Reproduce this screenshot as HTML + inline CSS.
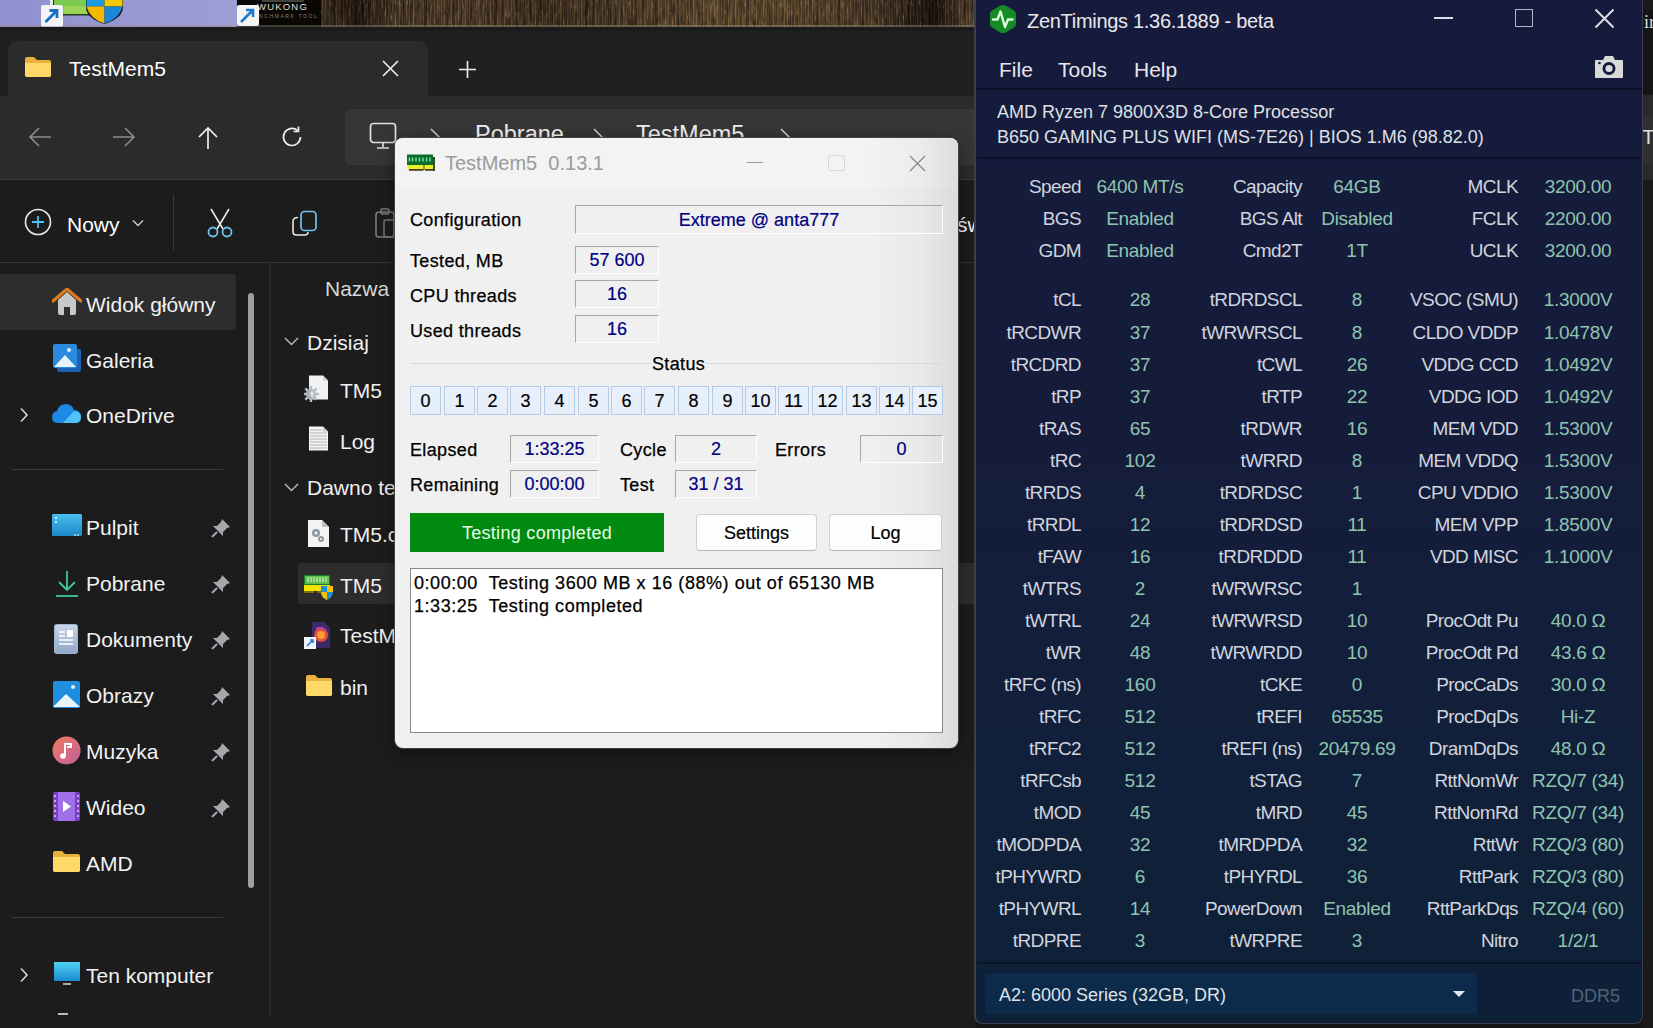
<!DOCTYPE html>
<html><head><meta charset="utf-8">
<style>
*{margin:0;padding:0;box-sizing:border-box}
html,body{width:1653px;height:1028px;overflow:hidden;background:#161616;font-family:"Liberation Sans",sans-serif}
.a{position:absolute}
.t{position:absolute;white-space:nowrap;line-height:1}
/* desktop */
#desk{left:0;top:0;width:1653px;height:27px;background:#4a3826}
#lav{left:0;top:0;width:237px;height:27px;background:linear-gradient(90deg,#8e91cd,#9699d3 60%,#9c9ed6)}
#wuk{left:237px;top:0;width:84px;height:27px;background:#0a0806}
#brown{left:321px;top:0;width:660px;height:27px;background:
 repeating-linear-gradient(90deg,rgba(0,0,0,.25) 0 1px,rgba(255,200,130,.08) 1px 2px,rgba(0,0,0,.12) 2px 4px,rgba(255,210,150,.05) 4px 5px,rgba(0,0,0,.18) 5px 7px),
 repeating-linear-gradient(90deg,rgba(0,0,0,0) 0 11px,rgba(0,0,0,.2) 11px 14px,rgba(0,0,0,0) 14px 23px),
 linear-gradient(90deg,#4a3826,#2a1e14 6%,#5a4530 11%,#5c4630 25%,#4a3826 33%,#5e4830 48%,#705838 60%,#6a5236 72%,#5a4630 84%,#1e1610 93%,#5a4530 97%,#6a5438)}
/* explorer */
#exp{left:0;top:27px;width:976px;height:1001px;background:#1c1c1c}
#tabstrip{left:0;top:27px;width:976px;height:69px;background:#202020}
#tab{left:8px;top:41px;width:420px;height:56px;background:#2b2b2b;border-radius:9px 9px 0 0}
#nav{left:0;top:96px;width:976px;height:84px;background:#2b2b2b;border-bottom:1px solid #3a3a3a}
#addr{left:345px;top:109px;width:640px;height:56px;background:#363636;border-radius:6px}
#cmd{left:0;top:181px;width:976px;height:82px;background:#1c1c1c;border-bottom:1px solid #333}
#side{left:0;top:263px;width:270px;height:753px;background:#1c1c1c}
.si{position:absolute;left:86px;font-size:20px;color:#f2f2f2;white-space:nowrap;line-height:1}
.pin{position:absolute;left:212px;width:18px;height:18px}

.tm{font-size:18px;color:#000;letter-spacing:0.35px;-webkit-text-stroke:0.25px #000}
.bx{position:absolute;border-top:1px solid #a8a8a8;border-left:1px solid #a8a8a8;border-right:1px solid #fff;border-bottom:1px solid #fff;display:flex;align-items:center;justify-content:center}
.bx span{font-size:18px;color:#000080;line-height:1;white-space:nowrap;-webkit-text-stroke:0.2px #000080}
.sb{position:absolute;top:386px;width:31px;height:29px;background:#e6effa;border:1px solid #b4cbe8;display:flex;align-items:center;justify-content:center}
.sb span{font-size:18px;color:#000;line-height:1;-webkit-text-stroke:0.2px #000}
.btn{position:absolute;background:#fdfdfd;border:1px solid #d0d0d0;border-bottom-color:#b8b8b8;border-radius:4px;display:flex;align-items:center;justify-content:center}
.btn span{font-size:18px;color:#000;line-height:1;-webkit-text-stroke:0.2px #000}

.zl{position:absolute;font-size:19px;line-height:1;color:#d0d4de;white-space:nowrap;letter-spacing:-0.6px}
.zv{position:absolute;width:200px;text-align:center;font-size:19px;line-height:1;color:#8fc4b0;white-space:nowrap;letter-spacing:-0.3px}
</style></head><body>
<div id="desk" class="a"></div>
<div id="lav" class="a"></div>
<div id="brown" class="a"></div>
<svg class="a" style="left:321px;top:0" width="655" height="25" viewBox="0 0 655 25"><defs><filter id="grain" x="0" y="0" width="100%" height="100%"><feTurbulence type="fractalNoise" baseFrequency="0.35 0.06" numOctaves="3" seed="7"/><feColorMatrix type="matrix" values="0 0 0 0 0  0 0 0 0 0  0 0 0 0 0  0 0 0 -1.6 1.05"/></filter><filter id="grain2" x="0" y="0" width="100%" height="100%"><feTurbulence type="fractalNoise" baseFrequency="0.5 0.1" numOctaves="2" seed="3"/><feColorMatrix type="matrix" values="0 0 0 0 1  0 0 0 0 0.85  0 0 0 0 0.6  0 0 0 2.2 -1.35"/></filter></defs><rect width="655" height="25" filter="url(#grain)" opacity=".55"/><rect width="655" height="25" filter="url(#grain2)" opacity=".45"/></svg>
<div id="wuk" class="a"></div>


<div id="exp" class="a"></div>
<div id="tabstrip" class="a"></div>
<div class="a" style="left:0;top:25px;width:976px;height:2px;background:rgba(150,140,125,.4)"></div>
<div class="a" style="left:0;top:27px;width:976px;height:4px;background:#1b1b1b"></div>
<div id="tab" class="a"></div>
<div id="nav" class="a"></div>
<div id="addr" class="a"></div>
<div id="cmd" class="a"></div>


<!-- desktop icons -->
<svg class="a" style="left:40px;top:0" width="85" height="27" viewBox="0 0 85 27">
 <rect x="10" y="0" width="3" height="6" fill="#e8e8f0"/>
 <rect x="13" y="0" width="2" height="6" fill="#1a2a1a"/>
 <rect x="14" y="0" width="36" height="15.5" fill="#1e3a1e"/>
 <rect x="14" y="0" width="35" height="14" fill="#7cc850"/>
 <g stroke="#d8f060" stroke-width="0.8" opacity=".8"><path d="M25 6v8M27 6v8M29 6v8M31 6v8M33 6v8M35 6v8M37 6v8M39 6v8M41 6v8M43 6v8M45 6v8M47 6v8"/></g>
 <path d="M46 0 h37 v7 q0 11 -18.5 17 q-18.5 -6 -18.5 -17z" fill="#1a1a1a"/>
 <path d="M46.5 0 h18 v6.5 h-18z" fill="#1a9ae0"/>
 <path d="M64.5 0 h18 v6.5 h-18z" fill="#f5c800"/>
 <path d="M46.5 6.5 h18 v17 q-15 -5 -18 -17z" fill="#f5b800"/>
 <path d="M64.5 6.5 h18 q-3 12 -18 17z" fill="#1a88d8"/>
 <rect x="1" y="5" width="22" height="21.5" rx="2" fill="#f4f4f8"/>
 <path d="M5.5 22 L15.5 12 M9.5 10.5 h7.5 v7.5" stroke="#1870c0" stroke-width="2.8" fill="none"/>
</svg>
<div class="t" style="left:257px;top:2px;font-size:9.5px;color:#e0dcd4;letter-spacing:1.2px">WUKONG</div><div class="a" style="left:262px;top:0;width:42px;height:2px;background:#6a655e;opacity:.6"></div>
<div class="t" style="left:259px;top:14px;font-size:5px;color:#8a8070;letter-spacing:1.6px">NCHMARK TOOL</div>
<svg class="a" style="left:237px;top:4px" width="22" height="23" viewBox="0 0 22 23">
 <rect x="0" y="1" width="22" height="21" rx="2" fill="#f4f4f4"/>
 <path d="M4 18 L15 7 M9 6 h7 v7" stroke="#1a7ad0" stroke-width="2.6" fill="none"/>
</svg>

<!-- tab -->
<svg class="a" style="left:25px;top:57px" width="26" height="20" viewBox="0 0 26 20">
 <path d="M0 2 q0-2 2-2 h7 l3 3 h12 q2 0 2 2 v13 q0 2-2 2 h-22 q-2 0-2-2z" fill="#e8b23a"/>
 <path d="M0 6 h26 v12 q0 2-2 2 h-22 q-2 0-2-2z" fill="#ffd86a"/>
</svg>
<div class="t" style="left:69px;top:58px;font-size:21px;color:#fff">TestMem5</div>
<svg class="a" style="left:382px;top:60px" width="17" height="17" viewBox="0 0 17 17"><path d="M1 1L16 16M16 1L1 16" stroke="#f0f0f0" stroke-width="1.6"/></svg>
<svg class="a" style="left:458px;top:60px" width="19" height="19" viewBox="0 0 19 19"><path d="M9.5 1v17M1 9.5h17" stroke="#f0f0f0" stroke-width="1.6"/></svg>

<!-- nav -->
<svg class="a" style="left:28px;top:126px" width="24" height="22" viewBox="0 0 24 22"><path d="M23 11H2M11 2L2 11L11 20" stroke="#8c8c8c" stroke-width="1.6" fill="none"/></svg>
<svg class="a" style="left:112px;top:126px" width="24" height="22" viewBox="0 0 24 22"><path d="M1 11H22M13 2L22 11L13 20" stroke="#8c8c8c" stroke-width="1.6" fill="none"/></svg>
<svg class="a" style="left:197px;top:126px" width="22" height="24" viewBox="0 0 22 24"><path d="M11 23V2M2 11L11 2L20 11" stroke="#f0f0f0" stroke-width="1.7" fill="none"/></svg>
<svg class="a" style="left:280px;top:125px" width="24" height="24" viewBox="0 0 24 24"><path d="M20.5 12 A8.5 8.5 0 1 1 17.5 5.5" stroke="#f0f0f0" stroke-width="1.7" fill="none"/><path d="M18.5 1.5V6.5H13.5" stroke="#f0f0f0" stroke-width="1.7" fill="none"/></svg>
<svg class="a" style="left:369px;top:122px" width="28" height="28" viewBox="0 0 28 28"><rect x="1.5" y="1.5" width="25" height="19" rx="3" stroke="#e0e0e0" stroke-width="1.7" fill="none"/><path d="M14 21v4M8 26h12" stroke="#e0e0e0" stroke-width="1.7"/></svg>
<svg class="a" style="left:428px;top:127px" width="14" height="20" viewBox="0 0 14 20"><path d="M3 2L11 10L3 18" stroke="#cfcfcf" stroke-width="1.5" fill="none"/></svg>
<div class="t" style="left:475px;top:123px;font-size:23.5px;color:#f0f0f0">Pobrane</div>
<svg class="a" style="left:591px;top:127px" width="14" height="20" viewBox="0 0 14 20"><path d="M3 2L11 10L3 18" stroke="#cfcfcf" stroke-width="1.5" fill="none"/></svg>
<div class="t" style="left:636px;top:123px;font-size:23.5px;color:#f0f0f0">TestMem5</div>
<svg class="a" style="left:778px;top:127px" width="14" height="20" viewBox="0 0 14 20"><path d="M3 2L11 10L3 18" stroke="#cfcfcf" stroke-width="1.5" fill="none"/></svg>

<!-- command bar -->
<svg class="a" style="left:24px;top:208px" width="28" height="28" viewBox="0 0 28 28"><circle cx="14" cy="14" r="12.5" stroke="#e8e8e8" stroke-width="1.6" fill="none"/><path d="M14 8v12M8 14h12" stroke="#4cc2ff" stroke-width="1.8"/></svg>
<div class="t" style="left:67px;top:214px;font-size:21px;color:#fff">Nowy</div>
<svg class="a" style="left:132px;top:219px" width="12" height="8" viewBox="0 0 12 8"><path d="M1 1.5L6 6.5L11 1.5" stroke="#d0d0d0" stroke-width="1.4" fill="none"/></svg>
<div class="a" style="left:173px;top:194px;width:1px;height:56px;background:#3a3a3a"></div>
<svg class="a" style="left:206px;top:208px" width="28" height="30" viewBox="0 0 28 30"><path d="M5 1L17 21M23 1L11 21" stroke="#e8e8e8" stroke-width="1.6"/><circle cx="7" cy="24" r="4.5" stroke="#70c4f0" stroke-width="1.8" fill="none"/><circle cx="21" cy="24" r="4.5" stroke="#70c4f0" stroke-width="1.8" fill="none"/></svg>
<svg class="a" style="left:290px;top:210px" width="28" height="28" viewBox="0 0 28 28"><path d="M8 7.5 q-5 0-5 4 v10 q0 3.5 3.5 3.5 h8 q3.5 0 3.5-3" stroke="#ece6e0" stroke-width="1.6" fill="none"/><rect x="11" y="1.5" width="15" height="19" rx="3.5" stroke="#70c4f0" stroke-width="1.7" fill="none"/></svg>
<svg class="a" style="left:374px;top:207px" width="24" height="32" viewBox="0 0 24 32"><rect x="2" y="5" width="18" height="25" rx="3" stroke="#7a7a7a" stroke-width="1.6" fill="none"/><rect x="7" y="2" width="8" height="5" rx="1" stroke="#7a7a7a" stroke-width="1.4" fill="none"/><rect x="10" y="13" width="12" height="17" rx="2" stroke="#7a7a7a" stroke-width="1.4" fill="none"/></svg>
<div class="t" style="left:957px;top:214px;font-size:21px;color:#f0f0f0">św</div>

<!-- sidebar -->
<div class="a" style="left:0;top:274px;width:236px;height:56px;background:#2d2d2d;border-radius:0 4px 4px 0"></div>
<div class="a" style="left:248px;top:293px;width:6px;height:595px;background:#9e9e9e;border-radius:3px"></div>
<div class="a" style="left:269px;top:263px;width:2px;height:753px;background:#262626"></div>
<div class="a" style="left:12px;top:469px;width:211px;height:1px;background:#3c3c3c"></div>
<div class="a" style="left:12px;top:917px;width:211px;height:1px;background:#3c3c3c"></div>

<svg class="a" style="left:52px;top:288px" width="30" height="28" viewBox="0 0 30 28"><path d="M6 12 L15 4 L24 12 V25 q0 2-2 2 h-4 v-8 h-6 v8 h-4 q-2 0-2-2z" fill="#c8c8c8"/><path d="M1 13 L15 1 L29 13" stroke="#e07a1e" stroke-width="3.2" fill="none" stroke-linejoin="round" stroke-linecap="round"/></svg>
<div class="si" style="top:294px;font-size:21px">Widok główny</div>
<svg class="a" style="left:52px;top:343px" width="30" height="30" viewBox="0 0 30 30"><rect x="5" y="6" width="24" height="23" rx="2" fill="#1d5fb0"/><rect x="1" y="1" width="24" height="24" rx="2" fill="#2a8ae0"/><path d="M2 24 L13 12 L24 24z" fill="#e8f2fc"/><circle cx="17" cy="7" r="2" fill="#e8f2fc"/></svg>
<div class="si" style="top:350px;font-size:21px">Galeria</div>
<svg class="a" style="left:19px;top:407px" width="10" height="16" viewBox="0 0 10 16"><path d="M2 1.5L8 8L2 14.5" stroke="#d8d8d8" stroke-width="1.6" fill="none"/></svg>
<svg class="a" style="left:51px;top:402px" width="31" height="22" viewBox="0 0 31 22"><path d="M7 21 q-6 0-6-6 q0-5 5-6 q2-7 9-7 q6 0 8 6 q7 0 7 7 q0 6-6 6z" fill="#1e88e5"/><path d="M12 21 l11-12 q7 1 7 6 q0 6-6 6z" fill="#4fc3f7"/></svg>
<div class="si" style="top:405px;font-size:21px">OneDrive</div>

<svg class="a" style="left:52px;top:514px" width="30" height="24" viewBox="0 0 30 24"><rect x="0" y="0" width="30" height="22" rx="2" fill="#2b9fd8"/><rect x="0" y="0" width="30" height="22" rx="2" fill="url(#gp)"/><defs><linearGradient id="gp" x1="0" y1="0" x2="0" y2="1"><stop offset="0" stop-color="#45c0f0"/><stop offset="1" stop-color="#1f86c8"/></linearGradient></defs><circle cx="4" cy="4" r="1" fill="#fff"/><circle cx="4" cy="8" r="1" fill="#fff"/><path d="M22 21h2M25 21h2" stroke="#fff" stroke-width="1"/></svg>
<div class="si" style="top:517px;font-size:21px">Pulpit</div>
<svg class="a" style="left:55px;top:570px" width="24" height="28" viewBox="0 0 24 28"><path d="M12 1V20M4 12L12 20L20 12" stroke="#3cc8a0" stroke-width="1.8" fill="none"/><path d="M1 26H23" stroke="#3cc8a0" stroke-width="1.8"/></svg>
<div class="si" style="top:573px;font-size:21px">Pobrane</div>
<svg class="a" style="left:54px;top:624px" width="24" height="30" viewBox="0 0 24 30"><rect x="0" y="0" width="24" height="30" rx="3" fill="#9fb3d0"/><rect x="1" y="1" width="22" height="28" rx="2" fill="url(#gd)"/><defs><linearGradient id="gd" x1="0" y1="0" x2="0" y2="1"><stop offset="0" stop-color="#c7d6ea"/><stop offset="1" stop-color="#90a8c8"/></linearGradient></defs><path d="M5 8h6M5 12h6M5 16h14M5 20h14" stroke="#fff" stroke-width="1.6"/><rect x="13" y="6" width="6" height="7" fill="#fff"/></svg>
<div class="si" style="top:629px;font-size:21px">Dokumenty</div>
<svg class="a" style="left:53px;top:681px" width="27" height="27" viewBox="0 0 27 27"><rect x="0" y="0" width="27" height="27" rx="2" fill="#1f8ee0"/><path d="M0 26 L13 13 L27 26z" fill="#eaf4fc"/><circle cx="20" cy="6" r="2" fill="#eaf4fc"/></svg>
<div class="si" style="top:685px;font-size:21px">Obrazy</div>
<svg class="a" style="left:52px;top:736px" width="29" height="29" viewBox="0 0 29 29"><defs><linearGradient id="gm" x1="0" y1="0" x2="1" y2="1"><stop offset="0" stop-color="#f07a5a"/><stop offset="1" stop-color="#c060a0"/></linearGradient></defs><circle cx="14.5" cy="14.5" r="14" fill="url(#gm)"/><path d="M13 20V8 h6 v3 h-4" stroke="#fff" stroke-width="2" fill="none"/><circle cx="11" cy="20" r="2.8" fill="#fff"/></svg>
<div class="si" style="top:741px;font-size:21px">Muzyka</div>
<svg class="a" style="left:53px;top:792px" width="27" height="29" viewBox="0 0 27 29"><rect x="0" y="0" width="27" height="29" rx="2" fill="#7b3fc8"/><rect x="5" y="0" width="17" height="29" fill="#a070e8"/><path d="M2 3v2M2 8v2M2 13v2M2 18v2M2 23v2M25 3v2M25 8v2M25 13v2M25 18v2M25 23v2" stroke="#e0d0ff" stroke-width="1.5"/><path d="M10 9 L18 14.5 L10 20z" fill="#fff"/></svg>
<div class="si" style="top:797px;font-size:21px">Wideo</div>
<svg class="a" style="left:53px;top:851px" width="27" height="21" viewBox="0 0 27 21"><path d="M0 2 q0-2 2-2 h7 l3 3 h13 q2 0 2 2 v14 q0 2-2 2 h-23 q-2 0-2-2z" fill="#e8b23a"/><path d="M0 6 h27 v13 q0 2-2 2 h-23 q-2 0-2-2z" fill="#ffd86a"/></svg>
<div class="si" style="top:853px;font-size:21px">AMD</div>

<svg class="a" style="left:19px;top:967px" width="10" height="16" viewBox="0 0 10 16"><path d="M2 1.5L8 8L2 14.5" stroke="#d8d8d8" stroke-width="1.6" fill="none"/></svg>
<svg class="a" style="left:54px;top:962px" width="26" height="26" viewBox="0 0 26 26"><defs><linearGradient id="gk" x1="0" y1="0" x2="0" y2="1"><stop offset="0" stop-color="#4fd0f0"/><stop offset="1" stop-color="#1a8ad0"/></linearGradient></defs><rect x="0" y="0" width="26" height="19" fill="url(#gk)"/><path d="M9 22h8" stroke="#aaa" stroke-width="2"/></svg>
<div class="si" style="top:965px;font-size:21px">Ten komputer</div>
<div class="a" style="left:58px;top:1013px;width:10px;height:2px;background:#bbb"></div>
<svg class="a" style="left:211px;top:518px" width="20" height="20" viewBox="0 0 20 20"><path d="M11 1 L19 9 L16 10 L12 14 L12 18 L2 8 L6 8 L10 4z" fill="#a4a9b0"/><path d="M6 14 L1 19" stroke="#a4a9b0" stroke-width="2"/></svg>
<svg class="a" style="left:211px;top:574px" width="20" height="20" viewBox="0 0 20 20"><path d="M11 1 L19 9 L16 10 L12 14 L12 18 L2 8 L6 8 L10 4z" fill="#a4a9b0"/><path d="M6 14 L1 19" stroke="#a4a9b0" stroke-width="2"/></svg>
<svg class="a" style="left:211px;top:630px" width="20" height="20" viewBox="0 0 20 20"><path d="M11 1 L19 9 L16 10 L12 14 L12 18 L2 8 L6 8 L10 4z" fill="#a4a9b0"/><path d="M6 14 L1 19" stroke="#a4a9b0" stroke-width="2"/></svg>
<svg class="a" style="left:211px;top:686px" width="20" height="20" viewBox="0 0 20 20"><path d="M11 1 L19 9 L16 10 L12 14 L12 18 L2 8 L6 8 L10 4z" fill="#a4a9b0"/><path d="M6 14 L1 19" stroke="#a4a9b0" stroke-width="2"/></svg>
<svg class="a" style="left:211px;top:742px" width="20" height="20" viewBox="0 0 20 20"><path d="M11 1 L19 9 L16 10 L12 14 L12 18 L2 8 L6 8 L10 4z" fill="#a4a9b0"/><path d="M6 14 L1 19" stroke="#a4a9b0" stroke-width="2"/></svg>
<svg class="a" style="left:211px;top:798px" width="20" height="20" viewBox="0 0 20 20"><path d="M11 1 L19 9 L16 10 L12 14 L12 18 L2 8 L6 8 L10 4z" fill="#a4a9b0"/><path d="M6 14 L1 19" stroke="#a4a9b0" stroke-width="2"/></svg>

<!-- main pane -->
<div class="t" style="left:325px;top:277.5px;font-size:21px;color:#d8d8d8">Nazwa</div>
<svg class="a" style="left:284px;top:336px" width="15" height="10" viewBox="0 0 15 10"><path d="M1 2L7.5 8.5L14 2" stroke="#bdbdbd" stroke-width="1.4" fill="none"/></svg>
<div class="t" style="left:307px;top:332px;font-size:21px;color:#f0f0f0">Dzisiaj</div>
<svg class="a" style="left:304px;top:375px" width="25" height="28" viewBox="0 0 25 28"><path d="M5 0.5 h14 l5 5 v19 h-19z" fill="#f2f2f2"/><path d="M19 0.5 v5 h5" fill="#cfcfcf"/><rect x="5.8" y="11" width="2.4" height="3.5" fill="#b8bec6" transform="rotate(0 7 19)"/><rect x="5.8" y="11" width="2.4" height="3.5" fill="#b8bec6" transform="rotate(45 7 19)"/><rect x="5.8" y="11" width="2.4" height="3.5" fill="#b8bec6" transform="rotate(90 7 19)"/><rect x="5.8" y="11" width="2.4" height="3.5" fill="#b8bec6" transform="rotate(135 7 19)"/><rect x="5.8" y="11" width="2.4" height="3.5" fill="#b8bec6" transform="rotate(180 7 19)"/><rect x="5.8" y="11" width="2.4" height="3.5" fill="#b8bec6" transform="rotate(225 7 19)"/><rect x="5.8" y="11" width="2.4" height="3.5" fill="#b8bec6" transform="rotate(270 7 19)"/><rect x="5.8" y="11" width="2.4" height="3.5" fill="#b8bec6" transform="rotate(315 7 19)"/><circle cx="7" cy="19" r="5.2" fill="#b8bec6"/><circle cx="7" cy="19" r="2.5" fill="#e6eaee"/><path d="M7 14.5 a4.5 4.5 0 0 0 0 9z" fill="#8e969e" opacity=".5"/></svg>
<div class="t" style="left:340px;top:379.5px;font-size:21px;color:#f0f0f0">TM5</div>
<svg class="a" style="left:309px;top:426px" width="20" height="25" viewBox="0 0 20 25"><path d="M0 0.5 h14 l5 5 v19 h-19z" fill="#f4f4f4"/><path d="M14 0.5 v5 h5" fill="#c8c8c8"/><path d="M1 4h12M1 7h17M1 10h17M1 13h17M1 16h17M1 19h17M1 22h17" stroke="#a8a8a8" stroke-width="0.9"/></svg>
<div class="t" style="left:340px;top:430.5px;font-size:21px;color:#f0f0f0">Log</div>
<svg class="a" style="left:284px;top:482px" width="15" height="10" viewBox="0 0 15 10"><path d="M1 2L7.5 8.5L14 2" stroke="#bdbdbd" stroke-width="1.4" fill="none"/></svg>
<div class="t" style="left:307px;top:477px;font-size:21px;color:#f0f0f0">Dawno te</div>
<svg class="a" style="left:308px;top:520px" width="21" height="27" viewBox="0 0 21 27"><path d="M0 0 h14 l7 7 v20 h-21z" fill="#f4f4f4"/><path d="M14 0 v7 h7" fill="#c0c0c0"/><circle cx="8" cy="13" r="4" fill="#8e98a2"/><circle cx="8" cy="13" r="1.5" fill="#f4f4f4"/><circle cx="13" cy="19" r="3" fill="#8e98a2"/><circle cx="13" cy="19" r="1.1" fill="#f4f4f4"/></svg>
<div class="t" style="left:340px;top:524px;font-size:21px;color:#f0f0f0">TM5.c</div>
<div class="a" style="left:298px;top:563px;width:690px;height:41px;background:#2d2d2d;border-radius:4px"></div>
<svg class="a" style="left:304px;top:573px" width="30" height="27" viewBox="0 0 30 27"><rect x="0" y="2" width="26" height="10" fill="#1a7a2a"/><rect x="1" y="3" width="24" height="8" fill="#5cc04a"/><path d="M4 4v5M7 4v5M10 4v5M13 4v5M16 4v5M19 4v5M22 4v5" stroke="#e8f8d8" stroke-width="1"/><rect x="0" y="12" width="26" height="6" fill="#f2e400"/><path d="M0 18h10v2h-10zM13 18h13v2h-13z" fill="#7a6a10"/><path d="M17 13 h12 v6 q0 5-6 8 q-6-3-6-8z" fill="#1e90d8"/><path d="M23 13 h6 v6 h-6z M17 19 h6 v8 q-6-3-6-8z" fill="#f5c000"/></svg>
<div class="t" style="left:340px;top:575px;font-size:21px;color:#f0f0f0">TM5</div>
<svg class="a" style="left:304px;top:622px" width="27" height="27" viewBox="0 0 27 27"><path d="M8 0 h12 l6 6 v20 h-18z" fill="#3a2a6a"/><circle cx="17" cy="13" r="7" fill="#e0503a"/><circle cx="17" cy="13" r="4" fill="#f8a030"/><path d="M12 7 q6-3 10 2" stroke="#c040a0" stroke-width="2" fill="none"/><rect x="0" y="15" width="12" height="12" fill="#f0f6fc"/><path d="M3 24 L9 18 M6 18 h3 v3" stroke="#2a7ad0" stroke-width="1.6" fill="none"/></svg>
<div class="t" style="left:340px;top:625px;font-size:21px;color:#f0f0f0">TestM</div>
<svg class="a" style="left:306px;top:675px" width="26" height="21" viewBox="0 0 26 21"><path d="M0 2 q0-2 2-2 h7 l3 3 h12 q2 0 2 2 v14 q0 2-2 2 h-22 q-2 0-2-2z" fill="#e8b23a"/><path d="M0 6 h26 v13 q0 2-2 2 h-22 q-2 0-2-2z" fill="#ffd86a"/></svg>
<div class="t" style="left:340px;top:677px;font-size:21px;color:#f0f0f0">bin</div>

<!-- right edge strip -->
<div class="a" style="left:1643px;top:0;width:10px;height:1028px;background:#1a1a1a"></div>
<div class="a" style="left:1643px;top:10px;width:10px;height:84px;background:#151515"></div>
<div class="a" style="left:1643px;top:95px;width:10px;height:20px;background:#2a2a2a"></div>
<div class="a" style="left:1643px;top:115px;width:10px;height:50px;background:#303030"></div>
<div class="a" style="left:1643px;top:165px;width:10px;height:15px;background:#2a2a2a"></div>
<div class="t" style="left:1644px;top:13px;font-size:18px;color:#ddd;font-family:'Liberation Serif',serif">ir</div>
<div class="t" style="left:1642px;top:125.5px;font-size:21px;color:#ddd">Te</div>

<!-- TM5 window -->
<div class="a" style="left:395px;top:138px;width:563px;height:610px;background:#f0f0f0;border-radius:8px;box-shadow:0 0 0 1px rgba(70,70,70,.9),0 4px 16px rgba(0,0,0,.45);overflow:hidden">
 <div class="a" style="left:0;top:0;width:563px;height:50px;background:#f3f3f3"></div>
 <div class="a" style="left:470px;top:0;width:93px;height:610px;background:linear-gradient(90deg,rgba(0,0,0,0),rgba(0,0,0,.03) 60%,rgba(0,0,0,.09))"></div>
</div>
<svg class="a" style="left:407px;top:154px" width="29" height="18" viewBox="0 0 29 18"><rect x="26" y="3" width="2" height="14" fill="#3a4a30"/><rect x="0" y="0.5" width="26" height="10.5" fill="#0a6e2a"/><path d="M2.5 3.5v4M5.5 3.5v4M9 3.5v4M12.5 3.5v4M16 3.5v4M19.5 3.5v4M23 3.5v4" stroke="#80f0b0" stroke-width="1.3"/><rect x="0.5" y="11" width="25.5" height="4" fill="#e8f028"/><rect x="16.5" y="11" width="1" height="5" fill="#4a4a10"/><path d="M2 15h14.5v1.8h-14.5zM18 15h9v1.8h-9z" fill="#4a3a10"/></svg>
<div class="t" style="left:445px;top:153px;font-size:20px;color:#9a9a9a">TestMem5&nbsp; 0.13.1</div>
<div class="a" style="left:747px;top:162px;width:16px;height:1px;background:#9a9a9a"></div>
<div class="a" style="left:828px;top:155px;width:17px;height:16px;border:1px solid #d8d8d8;border-radius:2px"></div>
<svg class="a" style="left:909px;top:155px" width="17" height="17" viewBox="0 0 17 17"><path d="M1 1L16 16M16 1L1 16" stroke="#8a8a8a" stroke-width="1.4"/></svg>

<div class="t tm" style="left:410px;top:211px">Configuration</div>
<div class="bx" style="left:575px;top:205px;width:368px;height:29px"><span>Extreme @ anta777</span></div>
<div class="t tm" style="left:410px;top:252px">Tested, MB</div>
<div class="bx" style="left:575px;top:246px;width:84px;height:28px"><span>57 600</span></div>
<div class="t tm" style="left:410px;top:287px">CPU threads</div>
<div class="bx" style="left:575px;top:280px;width:84px;height:28px"><span>16</span></div>
<div class="t tm" style="left:410px;top:322px">Used threads</div>
<div class="bx" style="left:575px;top:315px;width:84px;height:28px"><span>16</span></div>

<div class="a" style="left:410px;top:363px;width:533px;height:1px;background:#d8d8d8"></div>
<div class="t tm" style="left:651px;top:355px;padding:0 1px;background:#f0f0f0">Status</div>
<div class="sb" style="left:410px"><span>0</span></div><div class="sb" style="left:444px"><span>1</span></div><div class="sb" style="left:477px"><span>2</span></div><div class="sb" style="left:510px"><span>3</span></div><div class="sb" style="left:544px"><span>4</span></div><div class="sb" style="left:578px"><span>5</span></div><div class="sb" style="left:611px"><span>6</span></div><div class="sb" style="left:644px"><span>7</span></div><div class="sb" style="left:678px"><span>8</span></div><div class="sb" style="left:712px"><span>9</span></div><div class="sb" style="left:745px"><span>10</span></div><div class="sb" style="left:778px"><span>11</span></div><div class="sb" style="left:812px"><span>12</span></div><div class="sb" style="left:846px"><span>13</span></div><div class="sb" style="left:879px"><span>14</span></div><div class="sb" style="left:912px"><span>15</span></div>
<div class="t tm" style="left:410px;top:441px">Elapsed</div>
<div class="bx" style="left:510px;top:435px;width:89px;height:28px"><span>1:33:25</span></div>
<div class="t tm" style="left:410px;top:476px">Remaining</div>
<div class="bx" style="left:510px;top:470px;width:89px;height:28px"><span>0:00:00</span></div>
<div class="t tm" style="left:620px;top:441px">Cycle</div>
<div class="bx" style="left:675px;top:435px;width:82px;height:28px"><span>2</span></div>
<div class="t tm" style="left:620px;top:476px">Test</div>
<div class="bx" style="left:675px;top:470px;width:82px;height:28px"><span>31 / 31</span></div>
<div class="t tm" style="left:775px;top:441px">Errors</div>
<div class="bx" style="left:860px;top:435px;width:83px;height:28px"><span>0</span></div>

<div class="a" style="left:410px;top:513px;width:254px;height:39px;background:#008a0f;display:flex;align-items:center;justify-content:center"><span style="font-size:18px;color:#e6ffe6;line-height:1;letter-spacing:0.3px">Testing completed</span></div>
<div class="btn" style="left:696px;top:514px;width:121px;height:37px"><span>Settings</span></div>
<div class="btn" style="left:829px;top:514px;width:113px;height:37px"><span>Log</span></div>
<div class="a" style="left:410px;top:568px;width:533px;height:165px;background:#fff;border:1px solid #8a8a8a"></div>
<div class="t tm" style="left:414px;top:574px;letter-spacing:0.55px">0:00:00&nbsp; Testing 3600 MB x 16 (88%) out of 65130 MB</div>
<div class="t tm" style="left:414px;top:597px;letter-spacing:0.55px">1:33:25&nbsp; Testing completed</div>

<!-- ZenTimings -->
<div class="a" style="left:974px;top:0;width:669px;height:1024px;background:linear-gradient(180deg,#161b3d 0%,#151c3a 40%,#11203a 75%,#0e2038 100%);border:1px solid #3a3e4c;border-left:2px solid #3c3f48;border-top:none;border-radius:0 0 8px 8px"></div>
<div class="a" style="left:977px;top:88px;width:665px;height:2px;background:#0c1028"></div>
<div class="a" style="left:977px;top:157px;width:665px;height:2px;background:#0c1028"></div>
<div class="a" style="left:977px;top:962px;width:665px;height:2px;background:#0a1424"></div>
<svg class="a" style="left:988px;top:3px" width="30" height="32" viewBox="0 0 30 32"><path d="M15 2 Q16.5 2 18 2.8 L26 7.5 Q28 8.7 28 11 V21 Q28 23.3 26 24.5 L18 29.2 Q15 31 12 29.2 L4 24.5 Q2 23.3 2 21 V11 Q2 8.7 4 7.5 L12 2.8 Q13.5 2 15 2z" fill="#158a26"/><path d="M5 16.5 h4.5 l3-8 l4.5 15.5 l3-7.5 h4.5" stroke="#d8ffd8" stroke-width="2.4" fill="none" stroke-linejoin="round" stroke-linecap="round"/></svg>
<div class="t" style="left:1027px;top:11px;font-size:20px;letter-spacing:-0.3px;color:#e8e8ec">ZenTimings 1.36.1889 - beta</div>
<div class="a" style="left:1434px;top:17px;width:19px;height:2px;background:#dcdce4"></div>
<div class="a" style="left:1515px;top:9px;width:18px;height:18px;border:1.5px solid #b4b8c8"></div>
<svg class="a" style="left:1594px;top:8px" width="21" height="21" viewBox="0 0 21 21"><path d="M1.5 1.5L19.5 19.5M19.5 1.5L1.5 19.5" stroke="#dcdce4" stroke-width="2"/></svg>
<div class="t" style="left:999px;top:59px;font-size:21px;color:#e6e6ee">File</div>
<div class="t" style="left:1058px;top:59px;font-size:21px;color:#e6e6ee">Tools</div>
<div class="t" style="left:1134px;top:59px;font-size:21px;color:#e6e6ee">Help</div>
<svg class="a" style="left:1594px;top:55px" width="30" height="24" viewBox="0 0 30 24"><path d="M2 5 h7 l2-4 h8 l2 4 h7 q1 0 1 1 v16 q0 1-1 1 h-26 q-1 0-1-1 v-16 q0-1 1-1z" fill="#d8dad8"/><circle cx="15" cy="13.5" r="6.5" fill="#161b3e"/><circle cx="15" cy="13.5" r="3.6" fill="#d8dad8"/><circle cx="5.5" cy="8" r="1.3" fill="#161b3e"/></svg>
<div class="t" style="left:997px;top:103px;font-size:18px;color:#dfe0e6">AMD Ryzen 7 9800X3D 8-Core Processor</div>
<div class="t" style="left:997px;top:128px;font-size:18px;color:#dfe0e6">B650 GAMING PLUS WIFI (MS-7E26) | BIOS 1.M6 (98.82.0)</div>
<div class="a" style="left:985px;top:973px;width:492px;height:41px;background:#0c2a4a;border-radius:2px"></div>
<div class="t" style="left:999px;top:986px;font-size:18px;color:#dfe3ea">A2: 6000 Series (32GB, DR)</div>
<svg class="a" style="left:1453px;top:991px" width="12" height="7" viewBox="0 0 12 7"><path d="M0 0h12L6 6z" fill="#e0e6ee"/></svg>
<div class="t" style="left:1571px;top:987px;font-size:18px;color:#4d6478">DDR5</div>

<div class="zl" style="right:572px;top:176.9px">Speed</div>
<div class="zv" style="left:1040px;top:176.9px">6400 MT/s</div>
<div class="zl" style="right:351px;top:176.9px">Capacity</div>
<div class="zv" style="left:1257px;top:176.9px">64GB</div>
<div class="zl" style="right:135px;top:176.9px">MCLK</div>
<div class="zv" style="left:1478px;top:176.9px">3200.00</div>
<div class="zl" style="right:572px;top:208.9px">BGS</div>
<div class="zv" style="left:1040px;top:208.9px">Enabled</div>
<div class="zl" style="right:351px;top:208.9px">BGS Alt</div>
<div class="zv" style="left:1257px;top:208.9px">Disabled</div>
<div class="zl" style="right:135px;top:208.9px">FCLK</div>
<div class="zv" style="left:1478px;top:208.9px">2200.00</div>
<div class="zl" style="right:572px;top:240.9px">GDM</div>
<div class="zv" style="left:1040px;top:240.9px">Enabled</div>
<div class="zl" style="right:351px;top:240.9px">Cmd2T</div>
<div class="zv" style="left:1257px;top:240.9px">1T</div>
<div class="zl" style="right:135px;top:240.9px">UCLK</div>
<div class="zv" style="left:1478px;top:240.9px">3200.00</div>
<div class="zl" style="right:572px;top:290.4px">tCL</div>
<div class="zv" style="left:1040px;top:290.4px">28</div>
<div class="zl" style="right:351px;top:290.4px">tRDRDSCL</div>
<div class="zv" style="left:1257px;top:290.4px">8</div>
<div class="zl" style="right:135px;top:290.4px">VSOC (SMU)</div>
<div class="zv" style="left:1478px;top:290.4px">1.3000V</div>
<div class="zl" style="right:572px;top:322.5px">tRCDWR</div>
<div class="zv" style="left:1040px;top:322.5px">37</div>
<div class="zl" style="right:351px;top:322.5px">tWRWRSCL</div>
<div class="zv" style="left:1257px;top:322.5px">8</div>
<div class="zl" style="right:135px;top:322.5px">CLDO VDDP</div>
<div class="zv" style="left:1478px;top:322.5px">1.0478V</div>
<div class="zl" style="right:572px;top:354.5px">tRCDRD</div>
<div class="zv" style="left:1040px;top:354.5px">37</div>
<div class="zl" style="right:351px;top:354.5px">tCWL</div>
<div class="zv" style="left:1257px;top:354.5px">26</div>
<div class="zl" style="right:135px;top:354.5px">VDDG CCD</div>
<div class="zv" style="left:1478px;top:354.5px">1.0492V</div>
<div class="zl" style="right:572px;top:386.6px">tRP</div>
<div class="zv" style="left:1040px;top:386.6px">37</div>
<div class="zl" style="right:351px;top:386.6px">tRTP</div>
<div class="zv" style="left:1257px;top:386.6px">22</div>
<div class="zl" style="right:135px;top:386.6px">VDDG IOD</div>
<div class="zv" style="left:1478px;top:386.6px">1.0492V</div>
<div class="zl" style="right:572px;top:418.6px">tRAS</div>
<div class="zv" style="left:1040px;top:418.6px">65</div>
<div class="zl" style="right:351px;top:418.6px">tRDWR</div>
<div class="zv" style="left:1257px;top:418.6px">16</div>
<div class="zl" style="right:135px;top:418.6px">MEM VDD</div>
<div class="zv" style="left:1478px;top:418.6px">1.5300V</div>
<div class="zl" style="right:572px;top:450.7px">tRC</div>
<div class="zv" style="left:1040px;top:450.7px">102</div>
<div class="zl" style="right:351px;top:450.7px">tWRRD</div>
<div class="zv" style="left:1257px;top:450.7px">8</div>
<div class="zl" style="right:135px;top:450.7px">MEM VDDQ</div>
<div class="zv" style="left:1478px;top:450.7px">1.5300V</div>
<div class="zl" style="right:572px;top:482.7px">tRRDS</div>
<div class="zv" style="left:1040px;top:482.7px">4</div>
<div class="zl" style="right:351px;top:482.7px">tRDRDSC</div>
<div class="zv" style="left:1257px;top:482.7px">1</div>
<div class="zl" style="right:135px;top:482.7px">CPU VDDIO</div>
<div class="zv" style="left:1478px;top:482.7px">1.5300V</div>
<div class="zl" style="right:572px;top:514.8px">tRRDL</div>
<div class="zv" style="left:1040px;top:514.8px">12</div>
<div class="zl" style="right:351px;top:514.8px">tRDRDSD</div>
<div class="zv" style="left:1257px;top:514.8px">11</div>
<div class="zl" style="right:135px;top:514.8px">MEM VPP</div>
<div class="zv" style="left:1478px;top:514.8px">1.8500V</div>
<div class="zl" style="right:572px;top:546.8px">tFAW</div>
<div class="zv" style="left:1040px;top:546.8px">16</div>
<div class="zl" style="right:351px;top:546.8px">tRDRDDD</div>
<div class="zv" style="left:1257px;top:546.8px">11</div>
<div class="zl" style="right:135px;top:546.8px">VDD MISC</div>
<div class="zv" style="left:1478px;top:546.8px">1.1000V</div>
<div class="zl" style="right:572px;top:578.9px">tWTRS</div>
<div class="zv" style="left:1040px;top:578.9px">2</div>
<div class="zl" style="right:351px;top:578.9px">tWRWRSC</div>
<div class="zv" style="left:1257px;top:578.9px">1</div>
<div class="zl" style="right:572px;top:610.9px">tWTRL</div>
<div class="zv" style="left:1040px;top:610.9px">24</div>
<div class="zl" style="right:351px;top:610.9px">tWRWRSD</div>
<div class="zv" style="left:1257px;top:610.9px">10</div>
<div class="zl" style="right:135px;top:610.9px">ProcOdt Pu</div>
<div class="zv" style="left:1478px;top:610.9px">40.0 Ω</div>
<div class="zl" style="right:572px;top:643.0px">tWR</div>
<div class="zv" style="left:1040px;top:643.0px">48</div>
<div class="zl" style="right:351px;top:643.0px">tWRWRDD</div>
<div class="zv" style="left:1257px;top:643.0px">10</div>
<div class="zl" style="right:135px;top:643.0px">ProcOdt Pd</div>
<div class="zv" style="left:1478px;top:643.0px">43.6 Ω</div>
<div class="zl" style="right:572px;top:675.0px">tRFC (ns)</div>
<div class="zv" style="left:1040px;top:675.0px">160</div>
<div class="zl" style="right:351px;top:675.0px">tCKE</div>
<div class="zv" style="left:1257px;top:675.0px">0</div>
<div class="zl" style="right:135px;top:675.0px">ProcCaDs</div>
<div class="zv" style="left:1478px;top:675.0px">30.0 Ω</div>
<div class="zl" style="right:572px;top:707.1px">tRFC</div>
<div class="zv" style="left:1040px;top:707.1px">512</div>
<div class="zl" style="right:351px;top:707.1px">tREFI</div>
<div class="zv" style="left:1257px;top:707.1px">65535</div>
<div class="zl" style="right:135px;top:707.1px">ProcDqDs</div>
<div class="zv" style="left:1478px;top:707.1px">Hi-Z</div>
<div class="zl" style="right:572px;top:739.1px">tRFC2</div>
<div class="zv" style="left:1040px;top:739.1px">512</div>
<div class="zl" style="right:351px;top:739.1px">tREFI (ns)</div>
<div class="zv" style="left:1257px;top:739.1px">20479.69</div>
<div class="zl" style="right:135px;top:739.1px">DramDqDs</div>
<div class="zv" style="left:1478px;top:739.1px">48.0 Ω</div>
<div class="zl" style="right:572px;top:771.2px">tRFCsb</div>
<div class="zv" style="left:1040px;top:771.2px">512</div>
<div class="zl" style="right:351px;top:771.2px">tSTAG</div>
<div class="zv" style="left:1257px;top:771.2px">7</div>
<div class="zl" style="right:135px;top:771.2px">RttNomWr</div>
<div class="zv" style="left:1478px;top:771.2px">RZQ/7 (34)</div>
<div class="zl" style="right:572px;top:803.2px">tMOD</div>
<div class="zv" style="left:1040px;top:803.2px">45</div>
<div class="zl" style="right:351px;top:803.2px">tMRD</div>
<div class="zv" style="left:1257px;top:803.2px">45</div>
<div class="zl" style="right:135px;top:803.2px">RttNomRd</div>
<div class="zv" style="left:1478px;top:803.2px">RZQ/7 (34)</div>
<div class="zl" style="right:572px;top:835.3px">tMODPDA</div>
<div class="zv" style="left:1040px;top:835.3px">32</div>
<div class="zl" style="right:351px;top:835.3px">tMRDPDA</div>
<div class="zv" style="left:1257px;top:835.3px">32</div>
<div class="zl" style="right:135px;top:835.3px">RttWr</div>
<div class="zv" style="left:1478px;top:835.3px">RZQ/3 (80)</div>
<div class="zl" style="right:572px;top:867.3px">tPHYWRD</div>
<div class="zv" style="left:1040px;top:867.3px">6</div>
<div class="zl" style="right:351px;top:867.3px">tPHYRDL</div>
<div class="zv" style="left:1257px;top:867.3px">36</div>
<div class="zl" style="right:135px;top:867.3px">RttPark</div>
<div class="zv" style="left:1478px;top:867.3px">RZQ/3 (80)</div>
<div class="zl" style="right:572px;top:899.4px">tPHYWRL</div>
<div class="zv" style="left:1040px;top:899.4px">14</div>
<div class="zl" style="right:351px;top:899.4px">PowerDown</div>
<div class="zv" style="left:1257px;top:899.4px">Enabled</div>
<div class="zl" style="right:135px;top:899.4px">RttParkDqs</div>
<div class="zv" style="left:1478px;top:899.4px">RZQ/4 (60)</div>
<div class="zl" style="right:572px;top:931.4px">tRDPRE</div>
<div class="zv" style="left:1040px;top:931.4px">3</div>
<div class="zl" style="right:351px;top:931.4px">tWRPRE</div>
<div class="zv" style="left:1257px;top:931.4px">3</div>
<div class="zl" style="right:135px;top:931.4px">Nitro</div>
<div class="zv" style="left:1478px;top:931.4px">1/2/1</div>
</body></html>
